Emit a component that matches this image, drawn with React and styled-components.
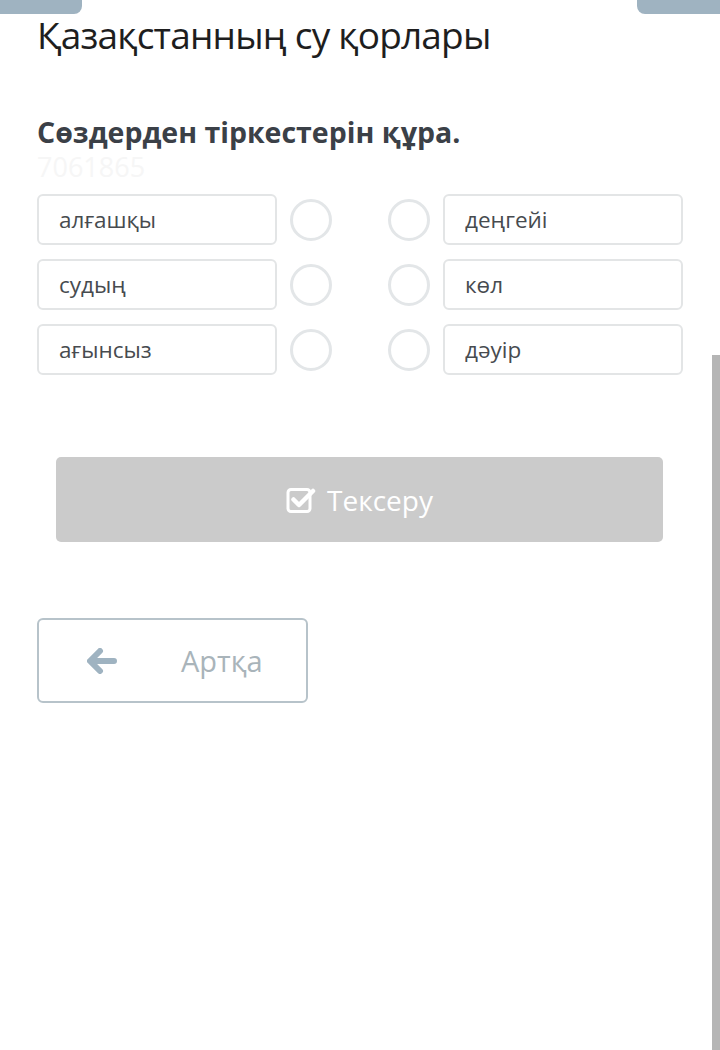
import React from "react"
import styled, { createGlobalStyle } from "styled-components"

const GlobalStyle = createGlobalStyle`
  html, body {
    margin: 0;
    padding: 0;
    background: #ffffff;
    font-family: "Open Sans", "Noto Sans", sans-serif;
  }
`

const Page = styled.div`
  position: relative;
  width: 720px;
  height: 1050px;
  overflow: hidden;
  background: #fff;
`

const TopBar = styled.div`
  display: flex;
  justify-content: space-between;
  height: 14px;
`

const Tab = styled.div`
  width: ${p => (p.$right ? "83px" : "82px")};
  height: 14px;
  background: #9fb3c1;
  border-radius: ${p => (p.$right ? "0 0 0 8px" : "0 0 8px 0")};
`

const Content = styled.div`
  padding: 0 37px;
`

const Title = styled.h1`
  margin: 0;
  font-size: 37px;
  font-weight: 400;
  color: #1e1e1e;
  line-height: 42px;
  letter-spacing: -0.8px;
`

const Task = styled.h2`
  margin: 58px 0 0;
  font-size: 28.5px;
  font-weight: 700;
  color: #3b4047;
  line-height: 36px;
`

const TaskId = styled.div`
  font-size: 27px;
  color: #f6f6f6;
  line-height: 30px;
  margin-top: 2px;
`

const Grid = styled.div`
  display: grid;
  grid-template-columns: 240px 1fr 240px;
  row-gap: 14px;
  margin-top: 12px;
`

const Card = styled.div`
  height: 51px;
  box-sizing: border-box;
  border: 2px solid #e3e5e6;
  border-radius: 6px;
  display: flex;
  align-items: center;
  padding-left: 20px;
  font-size: 22.5px;
  color: #474b4f;
`

const Dots = styled.div`
  display: flex;
  justify-content: space-between;
  align-items: center;
  padding: 0 13px;
`

const Dot = styled.div`
  width: 42px;
  height: 42px;
  box-sizing: border-box;
  border: 3px solid #e3e6e8;
  border-radius: 50%;
`

const CheckButton = styled.button`
  display: flex;
  align-items: center;
  justify-content: center;
  gap: 11px;
  width: 607px;
  height: 85px;
  margin: 82px 0 0 19px;
  padding: 0;
  border: none;
  border-radius: 5px;
  background: #cbcbcb;
  color: #ffffff;
  font-family: inherit;
  font-size: 28px;
  font-weight: 400;
`

const BackButton = styled.button`
  display: flex;
  align-items: center;
  width: 271px;
  height: 85px;
  margin-top: 76px;
  box-sizing: border-box;
  border: 2px solid #b7c3ca;
  border-radius: 6px;
  background: #fff;
  padding: 0 0 0 48px;
  font-family: inherit;
  font-size: 29px;
  color: #a9b4ba;
`

const BackLabel = styled.span`
  margin-left: 64px;
`

const ScrollThumb = styled.div`
  position: absolute;
  right: 0;
  top: 355px;
  bottom: 0;
  width: 8px;
  background: #b5b5b5;
`

const CheckIcon = () => (
  <svg width="30" height="28" viewBox="0 0 30 28">
    <rect x="2" y="3.5" width="22" height="22" rx="3" fill="none" stroke="#fff" strokeWidth="3" />
    <path d="M7.5 13.5 L13 19 L27 5" fill="none" stroke="#fff" strokeWidth="4.5" strokeLinecap="round" strokeLinejoin="round" />
  </svg>
)

const ArrowIcon = () => (
  <svg width="30" height="26" viewBox="0 0 30 26">
    <path d="M13 3 L3 13 L13 23 M4 13 H27" fill="none" stroke="#9fb3c1" strokeWidth="6" strokeLinecap="round" strokeLinejoin="round" />
  </svg>
)

const left = ["алғашқы", "судың", "ағынсыз"]
const right = ["деңгейі", "көл", "дәуір"]

export default function App() {
  return (
    <Page>
      <GlobalStyle />
      <TopBar>
        <Tab />
        <Tab $right />
      </TopBar>
      <Content>
        <Title>Қазақстанның су қорлары</Title>
        <Task>Сөздерден тіркестерін құра.</Task>
        <TaskId>7061865</TaskId>
        <Grid>
          {left.map((w, i) => (
            <React.Fragment key={w}>
              <Card>{w}</Card>
              <Dots>
                <Dot />
                <Dot />
              </Dots>
              <Card>{right[i]}</Card>
            </React.Fragment>
          ))}
        </Grid>
        <CheckButton>
          <CheckIcon />
          Тексеру
        </CheckButton>
        <BackButton>
          <ArrowIcon />
          <BackLabel>Артқа</BackLabel>
        </BackButton>
      </Content>
      <ScrollThumb />
    </Page>
  )
}
